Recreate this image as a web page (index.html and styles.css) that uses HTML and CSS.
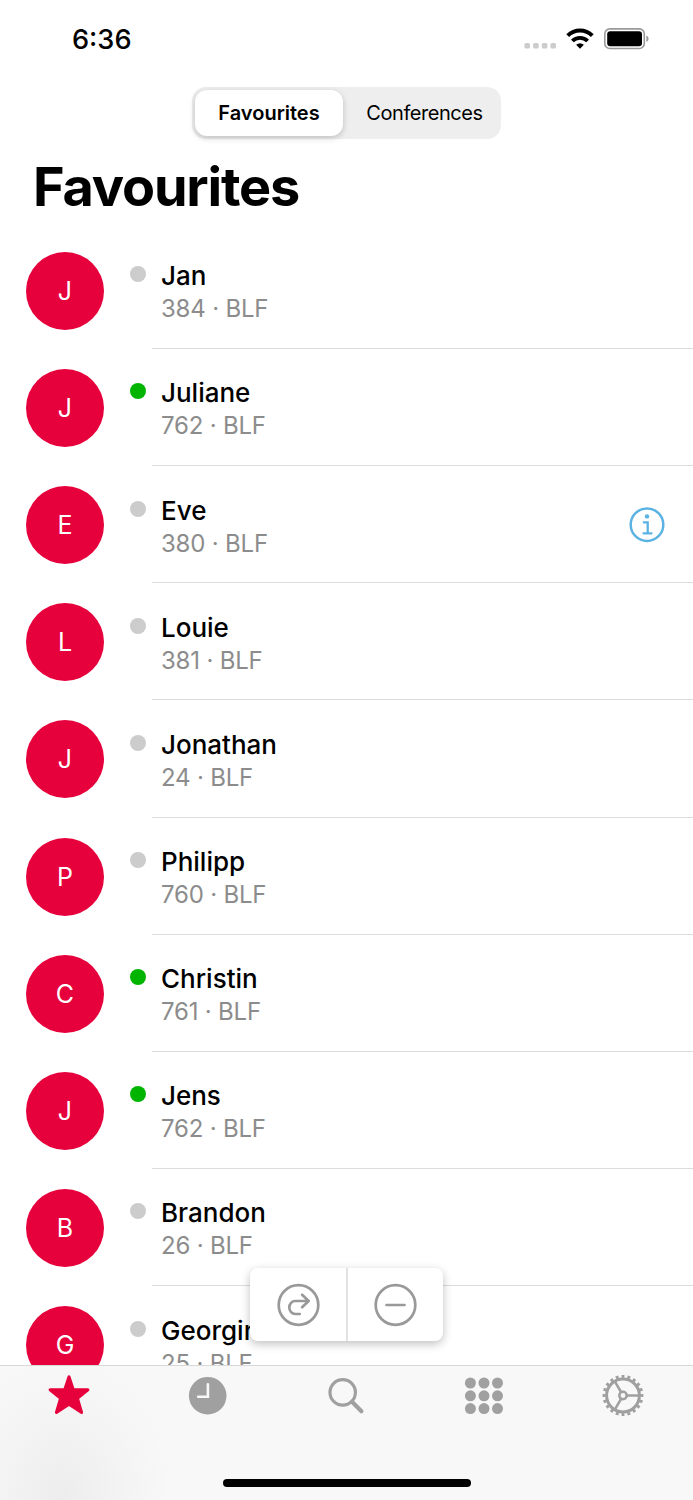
FILE: index.html
```html
<!DOCTYPE html>
<html lang="en">
<head>
  <meta charset="UTF-8">
  <title>Favourites</title>
  <link rel="stylesheet" href="styles.css">
</head>
<body>

<div class="phone">
  <header class="status-bar">
    <span class="time">6:36</span>
    <div class="status-icons">
      <svg class="signal" width="32" height="6" viewBox="0 0 32 6" fill="#ccc">
        <rect x="0.4" width="5.6" height="5.6" rx="1.6"/>
        <rect x="9.1" width="5.6" height="5.6" rx="1.6"/>
        <rect x="17.8" width="5.6" height="5.6" rx="1.6"/>
        <rect x="26.400" width="5.6" height="5.6" rx="1.6"/>
      </svg>
      <svg class="wifi" width="28" height="22" viewBox="0 0 28 22" fill="none" stroke="#000" stroke-width="3.9">
        <path d="M1.700 7.600a17.400 17.400 0 0 1 24.600 0"/>
        <path d="M6.400 13a10.700 10.700 0 0 1 15.200 0"/>
        <path d="M14 20.700l-3.900-3.900q3.900-3.200 7.800 0z" fill="#000" stroke="none"/>
      </svg>
      <svg class="battery" width="45" height="22" viewBox="0 0 45 22">
        <rect x=".8" y=".9" width="39.500" height="19.600" rx="5" fill="none" stroke="#999" stroke-width="1.6"/>
        <rect x="3.2" y="3.3" width="34.800" height="14.900" rx="3" fill="#000"/>
        <path d="M42.400 7.500q2.200 1 2.200 3.300t-2.200 3.300z" fill="#999"/>
      </svg>
    </div>
  </header>

  <div class="segments">
    <button class="segment active">Favourites</button>
    <button class="segment">Conferences</button>
  </div>

  <h1>Favourites</h1>

  <main class="contacts">
    <div class="contact">
      <div class="avatar">J</div>
      <span class="presence"></span>
      <div class="details">
        <div class="name">Jan</div>
        <div class="number">384 · BLF</div>
      </div>
    </div>
    <div class="contact">
      <div class="avatar">J</div>
      <span class="presence online"></span>
      <div class="details">
        <div class="name">Juliane</div>
        <div class="number">762 · BLF</div>
      </div>
    </div>
    <div class="contact">
      <div class="avatar">E</div>
      <span class="presence"></span>
      <div class="details">
        <div class="name">Eve</div>
        <div class="number">380 · BLF</div>
      </div>
      <svg class="info" width="36" height="36" viewBox="0 0 36 36" fill="none" stroke="#5bb3e4" stroke-width="2.3">
        <circle cx="18" cy="17.700" r="16.300" stroke-width="2.5"/>
        <circle cx="18" cy="9.400" r="2.200" fill="#5bb3e4" stroke="none"/>
        <path d="M14.800 15.300h3.900v10.900M14.500 26.300h8" stroke-linecap="round"/>
      </svg>
    </div>
    <div class="contact">
      <div class="avatar">L</div>
      <span class="presence"></span>
      <div class="details">
        <div class="name">Louie</div>
        <div class="number">381 · BLF</div>
      </div>
    </div>
    <div class="contact">
      <div class="avatar">J</div>
      <span class="presence"></span>
      <div class="details">
        <div class="name">Jonathan</div>
        <div class="number">24 · BLF</div>
      </div>
    </div>
    <div class="contact">
      <div class="avatar">P</div>
      <span class="presence"></span>
      <div class="details">
        <div class="name">Philipp</div>
        <div class="number">760 · BLF</div>
      </div>
    </div>
    <div class="contact">
      <div class="avatar">C</div>
      <span class="presence online"></span>
      <div class="details">
        <div class="name">Christin</div>
        <div class="number">761 · BLF</div>
      </div>
    </div>
    <div class="contact">
      <div class="avatar">J</div>
      <span class="presence online"></span>
      <div class="details">
        <div class="name">Jens</div>
        <div class="number">762 · BLF</div>
      </div>
    </div>
    <div class="contact">
      <div class="avatar">B</div>
      <span class="presence"></span>
      <div class="details">
        <div class="name">Brandon</div>
        <div class="number">26 · BLF</div>
      </div>
    </div>
    <div class="contact">
      <div class="avatar">G</div>
      <span class="presence"></span>
      <div class="details">
        <div class="name">Georgina</div>
        <div class="number">25 · BLF</div>
      </div>
    </div>
  </main>

  <!-- floating call actions -->
  <div class="actions">
    <button>
      <svg width="44" height="44" viewBox="0 0 44 44" fill="none" stroke="#999" stroke-width="2.7" stroke-linecap="round" stroke-linejoin="round">
        <circle cx="22.500" cy="22" r="19.800"/>
        <path d="M23.700 31h-4.400a6 6.500 0 0 1 0-13h13M26.100 11.800l6.600 6.200-6.600 6.200"/>
      </svg>
    </button>
    <button>
      <svg width="44" height="44" viewBox="0 0 44 44" fill="none" stroke="#999" stroke-width="2.7" stroke-linecap="round">
        <circle cx="22.500" cy="22" r="19.800"/>
        <path d="M13.500 22h18"/>
      </svg>
    </button>
  </div>

  <nav class="tab-bar">
    <a class="tab">
      <svg width="44" height="44" viewBox="0 0 44 44" fill="#e6003c" stroke="#e6003c" stroke-width="3" stroke-linejoin="round">
        <path d="M22 2.800l4.300 13h14.600L30.400 24.300l4.200 14.200L22 30.200 9.400 38.500l4.200-14.200L3.100 15.800h14.600z"/>
      </svg>
    </a>
    <a class="tab">
      <svg width="44" height="44" viewBox="0 0 44 44">
        <circle cx="21.700" cy="21.700" r="18.800" fill="#a0a0a0"/>
        <path d="M21.900 10.200V22.700H12.200" fill="none" stroke="#f8f8f8" stroke-width="2.600" stroke-linecap="round"/>
      </svg>
    </a>
    <a class="tab">
      <svg width="44" height="44" viewBox="0 0 44 44" fill="none" stroke="#a0a0a0">
        <circle cx="18.700" cy="18.400" r="12.700" stroke-width="3.2"/>
        <path d="M28 27.800l9.400 9.400" stroke-width="4.2" stroke-linecap="round"/>
      </svg>
    </a>
    <a class="tab">
      <svg width="44" height="44" viewBox="0 0 44 44" fill="#a0a0a0">
        <circle cx="7.400" cy="9" r="5.500"/><circle cx="21" cy="9" r="5.500"/><circle cx="34.500" cy="9" r="5.500"/>
        <circle cx="7.400" cy="21.800" r="5.500"/><circle cx="21" cy="21.800" r="5.500"/><circle cx="34.500" cy="21.800" r="5.500"/>
        <circle cx="7.400" cy="34.600" r="5.500"/><circle cx="21" cy="34.600" r="5.500"/><circle cx="34.500" cy="34.600" r="5.500"/>
      </svg>
    </a>
    <a class="tab">
      <svg width="44" height="44" viewBox="0 0 44 44" fill="none" stroke="#a0a0a0">
        <circle cx="21" cy="21.500" r="16.400" stroke-width="3"/>
        <circle cx="21" cy="21.500" r="18.700" stroke-width="3.500" pathLength="180" stroke-dasharray="4.400 4.600" stroke-dashoffset="2.200"/>
        <circle cx="21" cy="21.500" r="3.700" stroke-width="2.500"/>
        <path d="M25 21.500h12.500M19 18L12.800 7.300M19 25l-6.200 10.700" stroke-width="2.500"/>
      </svg>
    </a>
    <div class="home-indicator"></div>
  </nav>
</div>

</body>
</html>
```
FILE: styles.css
```css
* {
  box-sizing: border-box;
}
body {
  margin: 0;
  background: #fff;
  color: #000;
  font-family: Inter, "Liberation Sans", sans-serif;
}
button {
  border: none;
  background: none;
  padding: 0;
  font-family: inherit;
  color: inherit;
}
.phone {
  position: relative;
  display: flex;
  flex-direction: column;
  height: 1500px;
  overflow: hidden;
}
.status-bar {
  display: flex;
  flex-shrink: 0;
  justify-content: space-between;
  align-items: center;
  height: 87px;
  padding: 0 44px 9px 72px;
}
.time {
  padding-top: 1px;
  font-size: 27.200px;
  font-weight: 550;
}
.status-icons {
  display: flex;
  align-items: center;
}
.signal {
  margin: 14px 10px 0 0;
}
.wifi {
  margin-right: 10px;
}
.segments {
  display: flex;
  flex-shrink: 0;
  align-self: center;
  width: 309px;
  height: 52px;
  padding: 3px;
  background: #eee;
  border-radius: 14px;
}
.segment {
  flex: 1;
  padding-left: 8px;
  font-size: 20px;
  letter-spacing: -0.45px;
  border-radius: 12px;
}
.segment.active {
  flex: 0 0 148px;
  padding-left: 0;
  background: #fff;
  font-weight: 600;
  letter-spacing: 0;
  box-shadow: 0 2px 6px rgba(0,0,0,0.2);
}
h1 {
  flex-shrink: 0;
  height: 92.850px;
  margin: 0;
  padding: 15px 0 0 33px;
  font-size: 54px;
  line-height: 66px;
  font-weight: 700;
  letter-spacing: -1.2px;
}
.contacts {
  flex: 1;
  min-height: 0;
  overflow: hidden;
}
.contact {
  display: flex;
  height: 117.150px;
  padding: 20px 28px 0 26px;
  background: linear-gradient(#dcdcdc, #dcdcdc) no-repeat 152px 100% / 541px 1px;
}
.avatar {
  width: 78px;
  height: 78px;
  background: #e6003c;
  border-radius: 50%;
  color: #fff;
  font-size: 25px;
  line-height: 79px;
  text-align: center;
}
.presence {
  width: 16px;
  height: 16px;
  margin: 14.500px 15px 0 26px;
  background: #ccc;
  border-radius: 50%;
}
.presence.online {
  background: #00b400;
}
.details {
  flex: 1;
  padding-top: 8.400px;
}
.name {
  font-size: 26px;
  line-height: 32px;
  font-weight: 500;
}
.number {
  color: #8c8c8c;
  font-size: 24px;
  line-height: 33px;
  letter-spacing: -0.200px;
}
.info {
  margin-top: 21px;
}
.actions {
  position: absolute;
  left: 250px;
  bottom: 159px;
  display: flex;
  width: 193px;
  height: 73px;
  background: #fff;
  border-radius: 8px;
  box-shadow: 0 3px 10px rgba(0,0,0,0.25);
}
.actions button {
  display: flex;
  flex: 1;
  align-items: center;
  justify-content: center;
}
.actions button + button {
  border-left: 2px solid #e2e2e2;
}
.tab-bar {
  display: grid;
  flex-shrink: 0;
  grid-template-columns: repeat(5, 1fr);
  grid-template-rows: 113px 8px;
  height: 135.500px;
  background: radial-gradient(ellipse 110px 140px at 62px 130px, #ededed, #f4f4f4 60%, #f8f8f8);
  border-top: 1px solid #d8d8d8;
}
.tab {
  padding-top: 8px;
  text-align: center;
}
.home-indicator {
  grid-column: 1 / -1;
  justify-self: center;
  width: 248px;
  height: 8px;
  background: #000;
  border-radius: 4px;
}
```
